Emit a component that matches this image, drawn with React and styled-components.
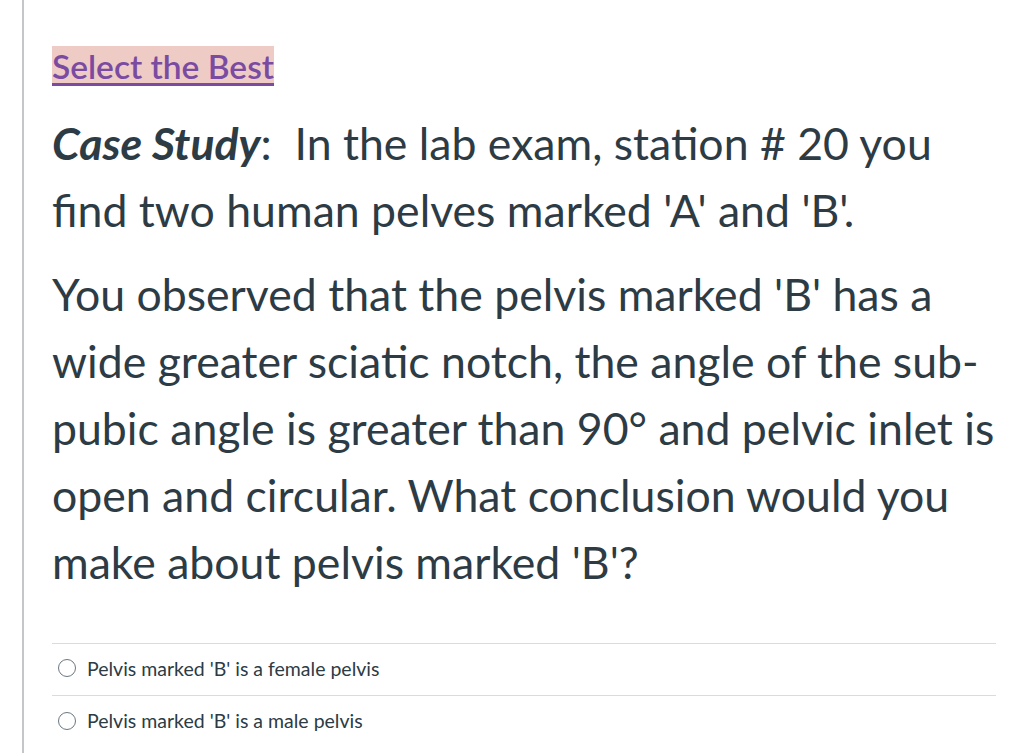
import styled, { createGlobalStyle } from "styled-components";

const Global = createGlobalStyle`
  body {
    margin: 0;
    background: #fff;
    font-family: Lato, "Noto Sans", sans-serif;
    color: #2d3b45;
  }
`;

const Page = styled.div`
  display: flex;
  min-height: 753px;
`;

const Rail = styled.div`
  width: 22px;
  border-right: 2px solid #c4c7c9;
  flex-shrink: 0;
`;

const Content = styled.div`
  width: 944px;
  padding: 46px 0 0 28px;
`;

const Heading = styled.h2`
  margin: 0 0 23px;
  font-size: 33.5px;
  font-weight: 600;
  line-height: 40px;
`;

const Mark = styled.span`
  background: #efcbc6;
  color: #7a4ba1;
  text-decoration: underline;
  text-decoration-thickness: 3px;
  text-underline-offset: 4px;
`;

const Para = styled.p`
  margin: 0 -20px 17px 0;
  font-size: 44.6px;
  line-height: 67px;
`;

const Answers = styled.div`
  margin-top: 48px;
  border-top: 1px solid #d8dcde;
`;

const Answer = styled.label`
  display: flex;
  align-items: center;
  gap: 11px;
  height: 52px;
  padding: 0 0 3px 6px;
  box-sizing: border-box;
  font-size: 19.5px;
  border-bottom: 1px solid #d8dcde;
  &:last-child {
    border-bottom: none;
  }
`;

const Radio = styled.span`
  width: 18px;
  height: 18px;
  border-radius: 50%;
  border: 1.5px solid #6b7780;
  box-sizing: border-box;
  background: #fff;
  flex-shrink: 0;
`;

export default function App() {
  return (
    <>
      <Global />
      <Page>
        <Rail />
        <Content>
          <Heading>
            <Mark>Select the Best</Mark>
          </Heading>
          <Para>
            <strong>
              <em>Case Study</em>
            </strong>
            :&nbsp; In the lab exam, station # 20 you find two human pelves
            marked 'A' and 'B'.
          </Para>
          <Para>
            You observed that the pelvis marked 'B' has a wide greater sciatic
            notch, the angle of the sub-pubic angle is greater than 90° and
            pelvic inlet is open and circular. What conclusion would you make
            about pelvis marked 'B'?
          </Para>
          <Answers>
            <Answer>
              <Radio />
              Pelvis marked 'B' is a female pelvis
            </Answer>
            <Answer>
              <Radio />
              Pelvis marked 'B' is a male pelvis
            </Answer>
          </Answers>
        </Content>
      </Page>
    </>
  );
}
